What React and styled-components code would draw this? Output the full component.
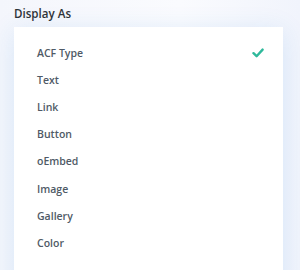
import styled, { createGlobalStyle } from 'styled-components';

const GlobalStyle = createGlobalStyle`
    body {
        margin: 0;
        background: #ffffff;
        font-family: "Open Sans", "Noto Sans", sans-serif;
    }
`

const Page = styled.div`
    width: 300px;
    height: 270px;
    overflow: hidden;
    padding: 6px 0 0 14px;
    box-sizing: border-box;
    background: linear-gradient(90deg, #f4f6fc 0%, #fafbfe 60%, #f1f4fc 100%);
`

const Label = styled.div`
    font-size: 11.6px;
    font-weight: 600;
    color: #2e3338;
    line-height: 16px;
    margin-bottom: 5px;
`

const Menu = styled.ul`
    list-style: none;
    margin: 0;
    padding: 12px 0 0;
    width: 269px;
    height: 260px;
    background: #ffffff;
    box-shadow: 0 4px 24px rgba(43, 135, 218, 0.14);
`

const Item = styled.li`
    display: flex;
    align-items: center;
    justify-content: space-between;
    height: 27.2px;
    padding: 0 19px 0 23px;
    font-size: 10.5px;
    font-weight: 600;
    color: #4f5a66;
`

const Check = () => (
    <svg width="12" height="10" viewBox="0 0 12 10">
        <path d="M1.5 5.2 L4.6 8.2 L10.6 1.6" fill="none" stroke="#2fb99b" strokeWidth="2.4" strokeLinecap="round" strokeLinejoin="round" />
    </svg>
)

const options = ['ACF Type', 'Text', 'Link', 'Button', 'oEmbed', 'Image', 'Gallery', 'Color']

function App(){
    return(
        <>
        <GlobalStyle />
        <Page>
            <Label>Display As</Label>
            <Menu>
                {options.map((o, i) =>
                    <Item key={o}>
                        {o}
                        {i == 0 && <Check />}
                    </Item>
                )}
            </Menu>
        </Page>
        </>
    )
}

export default App
